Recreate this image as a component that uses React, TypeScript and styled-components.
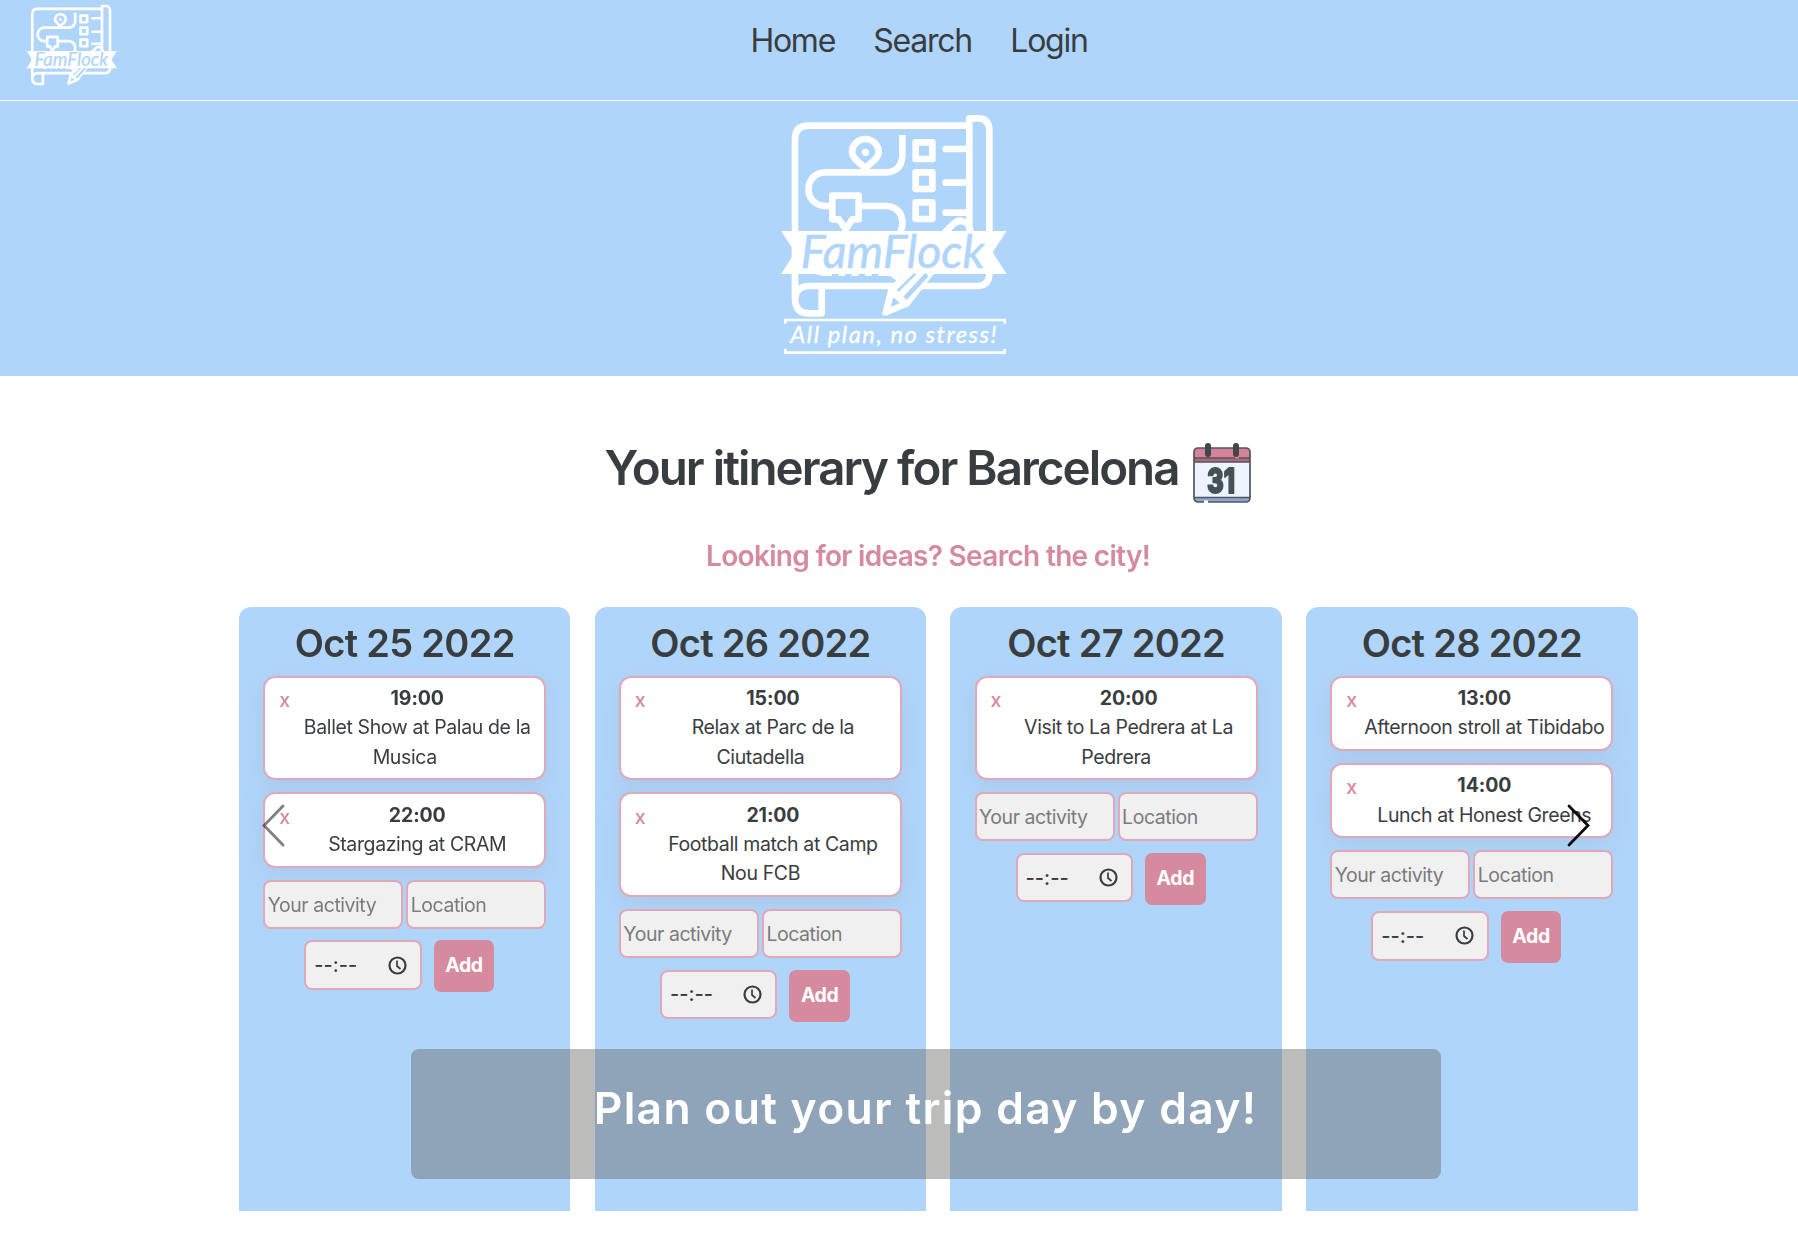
import React from "react";
import styled, { createGlobalStyle } from "styled-components";

const SKY = "#b0d5fb";
const PINK = "#d58a9e";
const PINK_LINE = "#e0a9ba";
const INK = "#3a3d3f";

const GlobalStyle = createGlobalStyle`
  * { box-sizing: border-box; }
  body {
    margin: 0;
    background: #fff;
    color: ${INK};
    font-family: Inter, "Liberation Sans", sans-serif;
    overflow: hidden;
  }
`;

const Page = styled.div`
  width: 1798px;
  height: 1240px;
  display: flex;
  flex-direction: column;
  overflow: hidden;
`;

const Header = styled.header`
  display: grid;
  grid-template-columns: 1fr auto 1fr;
  align-items: start;
  height: 101px;
  padding: 0 0 0 26px;
  background: ${SKY};
  border-bottom: 1px solid #fff;
`;

const HeaderLogo = styled.a`
  display: block;
  height: 85px;
  padding-top: 4px;
`;

const Nav = styled.nav`
  display: flex;
  gap: 38.3px;
  padding-top: 20px;
  margin-left: 14px;
`;

const NavLink = styled.a`
  font-size: 32px;
  line-height: 41px;
  letter-spacing: -1.25px;
  color: ${INK};
`;

const Hero = styled.section`
  display: flex;
  justify-content: center;
  height: 275px;
  padding: 4px 8px 0 0;
  background: ${SKY};
`;

const Carousel = styled.main`
  position: relative;
  flex: 1;
`;

const Slide = styled.section`
  display: flex;
  flex-direction: column;
  align-items: center;
  padding: 67px 0 0 59px;
  filter: blur(0.55px);
`;

const TitleRow = styled.div`
  display: flex;
  gap: 14px;
  height: 60px;
  margin-right: 2px;
`;

const Title = styled.h1`
  margin: 0;
  font-size: 47.5px;
  font-weight: 600;
  line-height: 50px;
  letter-spacing: -1.96px;
  white-space: nowrap;
`;

const IdeasLink = styled.a`
  margin: 35.5px 1px 0 0;
  font-size: 28px;
  font-weight: 600;
  line-height: 34px;
  letter-spacing: -0.69px;
  color: ${PINK};
`;

const Days = styled.div`
  display: grid;
  grid-template-columns: repeat(4, 331.5px);
  gap: 24.2px;
  margin: 34.5px 0 0 19.5px;
`;

const Day = styled.article`
  display: flex;
  flex-direction: column;
  gap: 11.8px;
  height: 603.5px;
  padding: 13px 24.2px 0;
  border-radius: 12px 12px 0 0;
  background: ${SKY};
`;

const DayTitle = styled.h2`
  margin: 0 0 -2.3px;
  font-size: 38px;
  font-weight: 600;
  line-height: 46px;
  letter-spacing: -0.7px;
  text-align: center;
`;

const Activity = styled.div`
  padding: 6.5px 6px;
  border: 2px solid ${PINK_LINE};
  border-radius: 12px;
  background: #fff;
  box-shadow: 0 8px 24px rgba(149, 157, 165, 0.2);
  font-size: 19.5px;
  line-height: 29.3px;
  letter-spacing: -0.38px;
  text-align: center;
  white-space: nowrap;
`;

const Remove = styled.span`
  float: left;
  width: 25px;
  height: 50px;
  padding-left: 8px;
  font-weight: 500;
  line-height: 32px;
  text-align: left;
  color: ${PINK};
`;

const Time = styled.strong`
  display: block;
  font-weight: 700;
  letter-spacing: -0.1px;
`;

const Fields = styled.div`
  display: flex;
  gap: 3px;
`;

const Field = styled.div`
  flex: 1;
  height: 49px;
  padding-left: 2.5px;
  border: 2px solid ${PINK_LINE};
  border-radius: 8px;
  background: #f0f0f0;
  font-size: 19.5px;
  line-height: 47px;
  letter-spacing: -0.45px;
  color: #7b7b7b;
`;

const SubmitRow = styled.div`
  display: flex;
  justify-content: center;
  gap: 12px;
  margin-right: 11px;
`;

const TimeField = styled.div`
  display: flex;
  align-items: center;
  justify-content: space-between;
  width: 117.5px;
  height: 49.5px;
  padding: 0 13px 0 8px;
  border: 2px solid ${PINK_LINE};
  border-radius: 8px;
  background: #f0f0f0;
  font-size: 20px;
  font-weight: 500;
`;

const AddButton = styled.div`
  width: 60.5px;
  height: 52px;
  border-radius: 7px;
  background: ${PINK};
  font-size: 19.5px;
  font-weight: 700;
  line-height: 51px;
  letter-spacing: -0.4px;
  text-align: center;
  color: #fff;
`;

const Arrow = styled.div<{ $side: "left" | "right" }>`
  position: absolute;
  top: 428px;
  ${(p) => (p.$side === "left" ? "left: 262px;" : "right: 208px;")}
  width: 23px;
  height: 43px;
  opacity: ${(p) => (p.$side === "left" ? 0.5 : 0.95)};
`;

const Caption = styled.div`
  position: absolute;
  top: 673px;
  left: 411px;
  width: 1030px;
  height: 130px;
  padding-right: 1px;
  border-radius: 8px;
  background: rgba(100, 99, 97, 0.43);
  font-size: 44.4px;
  font-weight: 600;
  line-height: 119px;
  letter-spacing: 1.3px;
  text-align: center;
  color: #fff;
`;

const Block = styled.svg`
  display: block;
  flex: none;
`;

function LogoArt() {
  return (
    <g fill="none" stroke="#fff" strokeWidth="20">
      <path d="M598 62H112Q75 64 75 102V583Q77 625 115 625H155V543H115Q77 545 75 583" strokeLinejoin="round" />
      <path d="M155 543H626Q656 541 658 508V76Q657 42 628 40H598V380" strokeLinejoin="round" />
      <path d="M286 190C272 174 246 162 246 141A40 39 0 0 1 326 141C326 162 300 174 286 190Z" />
      <circle cx="286.500" cy="142" r="11" fill="#fff" stroke="none" />
      <path d="M397 90V154Q393 200 350 202H165C100 204 98 300 165 303H187M265 303H350Q400 308 397 362L390 385" />
      <path d="M187 272H266V343H247L227 373L207 343H187Z" strokeLinejoin="round" />
      {[112, 202, 292].map((y) => (
        <rect key={y} x="437" y={y} width="50" height="50" strokeLinejoin="round" />
      ))}
      <path d="M527 132H592M527 233H592M527 323H592" strokeLinecap="round" />
      <path d="M522 385L549 358Q570 338 590 355Q602 366 602 385" />
      <path d="M33 378H710L668 442L710 507H33L75 442Z" fill="#fff" stroke="none" />
      <path
        d="M132 506H186V513H160ZM206 506H225V513H206ZM245 506H265V513H245ZM285 506H305V513H285ZM325 506H395L382 529L360 513H325Z"
        fill="#fff"
        stroke="none"
      />
      <path
        d="M397 506H492L417 603L348 632Q336 634 337 622L355 552Z"
        fill="#fff"
        stroke="none"
      />
      <g stroke={SKY}>
        <path d="M383 558L436 506" strokeWidth="8" />
        <path d="M405 580L471 508" strokeWidth="14" />
        <path d="M370 577L390 594L362 606Z" fill={SKY} stroke="none" />
      </g>
      <text
        x="92"
        y="490"
        fill={SKY}
        stroke={SKY}
        strokeWidth="1.500"
        fontFamily="Lato, sans-serif"
        fontStyle="italic"
        fontSize="139.500"
      >
        FamFlock
      </text>
    </g>
  );
}

function Logo() {
  return (
    <Block width="250" height="260" viewBox="0 0 750 780">
      <LogoArt />
      <path
        d="M46 656V645H704V656M46 731V743H704V731"
        fill="none"
        stroke="#fff"
        strokeWidth="8"
      />
      <text
        x="61"
        y="714"
        fill="#fff"
        stroke="#fff"
        strokeWidth="1"
        fontFamily="Lato, sans-serif"
        fontStyle="italic"
        fontSize="71"
        letterSpacing="4.700"
      >
        All plan, no stress!
      </text>
    </Block>
  );
}

function SmallLogo() {
  return (
    <Block width="92" height="82" viewBox="28 25 690 615">
      <LogoArt />
    </Block>
  );
}

function Calendar() {
  return (
    <Block width="58" height="60" viewBox="0 0 58 60">
      <rect x="1" y="5" width="56" height="54" rx="4" fill="#edf4ff" />
      <path d="M1 19V9Q1 5 5 5H53Q57 5 57 9V19Z" fill="#d58398" />
      <path d="M1 15H57V19H1Z" fill="#ad6879" />
      <path d="M1 54H57V56Q56 59 53 59H5Q1 59 1 55Z" fill="#8aa8d2" />
      <path d="M1 15H42M46 15H57M1 19H57M1 54.500H57" stroke="#53555c" strokeWidth="1.300" />
      <rect x="1" y="5" width="56" height="54" rx="4" fill="none" stroke="#53555c" strokeWidth="1.700" />
      <path d="M15 3V11M43 3V11" stroke="#41474b" strokeWidth="6" strokeLinecap="round" />
      <path d="M11 59H15" stroke="#fff" strokeWidth="3" />
      <text
        x="28"
        y="49.500"
        textAnchor="middle"
        fill="#465056"
        stroke="#465056"
        strokeWidth="2"
        strokeLinejoin="round"
        fontFamily="Inter, sans-serif"
        fontSize="34"
        fontWeight="800"
        textLength="28"
        lengthAdjust="spacingAndGlyphs"
      >
        31
      </text>
    </Block>
  );
}

function Clock() {
  return (
    <Block width="19" height="19" viewBox="0 0 19 19" fill="none" stroke={INK}>
      <circle cx="9.500" cy="9.500" r="8" strokeWidth="2.200" />
      <path d="M9 4.500V10L12.500 13" strokeWidth="1.700" />
    </Block>
  );
}

type Item = { time: string; lines: string[] };

const days: { date: string; items: Item[] }[] = [
  {
    date: "Oct 25 2022",
    items: [
      { time: "19:00", lines: ["Ballet Show at Palau de la", "Musica"] },
      { time: "22:00", lines: ["Stargazing at CRAM"] },
    ],
  },
  {
    date: "Oct 26 2022",
    items: [
      { time: "15:00", lines: ["Relax at Parc de la", "Ciutadella"] },
      { time: "21:00", lines: ["Football match at Camp", "Nou FCB"] },
    ],
  },
  {
    date: "Oct 27 2022",
    items: [{ time: "20:00", lines: ["Visit to La Pedrera at La", "Pedrera"] }],
  },
  {
    date: "Oct 28 2022",
    items: [
      { time: "13:00", lines: ["Afternoon stroll at Tibidabo"] },
      { time: "14:00", lines: ["Lunch at Honest Greens"] },
    ],
  },
];

export default function App() {
  return (
    <Page>
      <GlobalStyle />
      <Header>
        <HeaderLogo>
          <SmallLogo />
        </HeaderLogo>
        <Nav>
          <NavLink>Home</NavLink>
          <NavLink>Search</NavLink>
          <NavLink>Login</NavLink>
        </Nav>
      </Header>
      <Hero>
        <Logo />
      </Hero>
      <Carousel>
        <Slide>
          <TitleRow>
            <Title>Your itinerary for Barcelona</Title>
            <Calendar />
          </TitleRow>
          <IdeasLink>Looking for ideas? Search the city!</IdeasLink>
          <Days>
            {days.map((day) => (
              <Day key={day.date}>
                <DayTitle>{day.date}</DayTitle>
                {day.items.map((item) => (
                  <Activity key={item.time}>
                    <Remove>x</Remove>
                    <Time>{item.time}</Time>
                    {item.lines.map((line, i) => (
                      <React.Fragment key={line}>
                        {i > 0 && <br />}
                        {line}
                      </React.Fragment>
                    ))}
                  </Activity>
                ))}
                <Fields>
                  <Field>Your activity</Field>
                  <Field>Location</Field>
                </Fields>
                <SubmitRow>
                  <TimeField>
                    <span>--:--</span>
                    <Clock />
                  </TimeField>
                  <AddButton>Add</AddButton>
                </SubmitRow>
              </Day>
            ))}
          </Days>
        </Slide>
        <Arrow $side="left">
          <Block width="23" height="43" viewBox="0 0 23 43" fill="none" stroke="#000" strokeWidth="2.800" strokeLinecap="round">
            <path d="M21 2L2 21.500L21 41" />
          </Block>
        </Arrow>
        <Arrow $side="right">
          <Block width="23" height="43" viewBox="0 0 23 43" fill="none" stroke="#000" strokeWidth="2.800" strokeLinecap="round">
            <path d="M2 2L21 21.500L2 41" />
          </Block>
        </Arrow>
        <Caption>Plan out your trip day by day!</Caption>
      </Carousel>
    </Page>
  );
}
